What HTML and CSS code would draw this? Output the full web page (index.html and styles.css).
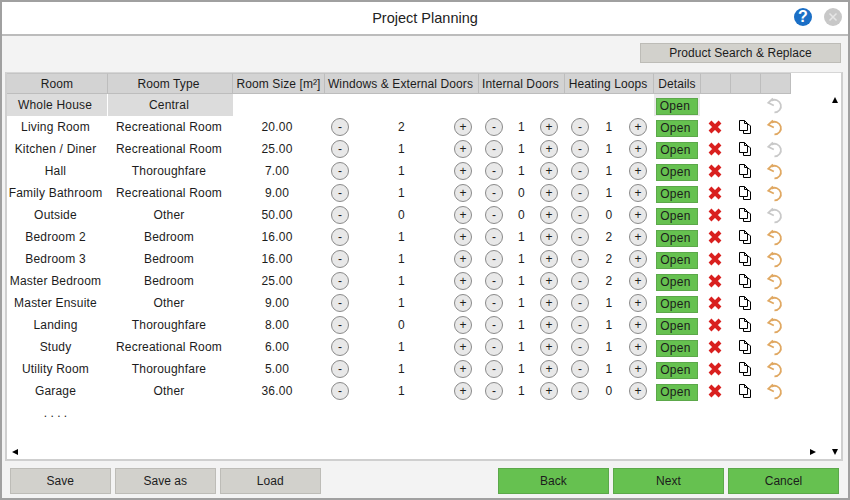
FILE: index.html
```html
<!DOCTYPE html>
<html lang="en">
<head>
<meta charset="utf-8">
<title>Project Planning</title>
<link rel="stylesheet" href="styles.css">
</head>
<body>
<svg class="defs" width="0" height="0" aria-hidden="true">
  <symbol id="i-del" viewBox="0 0 14 14"><path d="M2 2L12 12M12 2L2 12" stroke="#d9201f" stroke-width="4" fill="none"/></symbol>
  <symbol id="i-copy" viewBox="0 0 14 14"><path d="M1.5 .5H6.5L9.5 3.5V10.5H1.5Z" fill="#fff" stroke="#000"/><path d="M6.5 .5V3.5H9.5" fill="none" stroke="#000"/><path d="M9.5 4.5H11L12.5 6V13.5H5.5V10.5" fill="none" stroke="#000"/></symbol>
  <symbol id="i-undo" viewBox="0 0 18 18"><path d="M5 4.5A6 6 0 1 1 8 15.6" fill="none" stroke="currentColor" stroke-width="1.7"/><path d="M6.6 2.2L2.2 6.4L7.4 9" fill="none" stroke="currentColor" stroke-width="1.7"/></symbol>
</svg>
<div class="window">
  <header class="titlebar">
    <h1 class="title">Project Planning</h1>
    <div class="win-actions">
      <span class="win-btn help">?</span>
      <span class="win-btn close"><svg width="10" height="10" viewBox="0 0 10 10"><path d="M1.5 1.5L8.5 8.5M8.5 1.5L1.5 8.5" stroke="#e6e6e6" stroke-width="1.5"/></svg></span>
    </div>
  </header>
  <main class="body">
    <div class="toolbar"><button class="btn top-btn">Product Search &amp; Replace</button></div>
    <section class="panel">
      <div class="content">
        <div class="row head">
          <div class="h">Room</div><div class="h">Room Type</div><div class="h">Room Size [m²]</div><div class="h">Windows &amp; External Doors</div><div class="h">Internal Doors</div><div class="h">Heating Loops</div><div class="h">Details</div><div class="h"></div><div class="h"></div><div class="h"></div>
        </div>
        <div class="row central">
          <div class="c shade">Whole House</div><div class="c shade">Central</div><div class="c"></div><div class="c"></div><div class="c"></div><div class="c"></div><div class="c det-shade"><button class="open">Open</button></div><div class="c"></div><div class="c"></div><div class="c"><svg class="undo off"><use href="#i-undo"/></svg></div>
        </div>
        <div class="row">
          <div class="c">Living Room</div><div class="c">Recreational Room</div><div class="c size">20.00</div>
          <div class="s"><b>-</b><i>2</i><b>+</b></div><div class="s"><b>-</b><i>1</i><b>+</b></div><div class="s"><b>-</b><i>1</i><b>+</b></div>
          <div class="c"><button class="open">Open</button></div><div class="c"><svg class="del"><use href="#i-del"/></svg></div><div class="c"><svg class="copy"><use href="#i-copy"/></svg></div><div class="c"><svg class="undo"><use href="#i-undo"/></svg></div>
        </div>
        <div class="row">
          <div class="c">Kitchen / Diner</div><div class="c">Recreational Room</div><div class="c size">25.00</div>
          <div class="s"><b>-</b><i>1</i><b>+</b></div><div class="s"><b>-</b><i>1</i><b>+</b></div><div class="s"><b>-</b><i>1</i><b>+</b></div>
          <div class="c"><button class="open">Open</button></div><div class="c"><svg class="del"><use href="#i-del"/></svg></div><div class="c"><svg class="copy"><use href="#i-copy"/></svg></div><div class="c"><svg class="undo off"><use href="#i-undo"/></svg></div>
        </div>
        <div class="row">
          <div class="c">Hall</div><div class="c">Thoroughfare</div><div class="c size">7.00</div>
          <div class="s"><b>-</b><i>1</i><b>+</b></div><div class="s"><b>-</b><i>1</i><b>+</b></div><div class="s"><b>-</b><i>1</i><b>+</b></div>
          <div class="c"><button class="open">Open</button></div><div class="c"><svg class="del"><use href="#i-del"/></svg></div><div class="c"><svg class="copy"><use href="#i-copy"/></svg></div><div class="c"><svg class="undo"><use href="#i-undo"/></svg></div>
        </div>
        <div class="row">
          <div class="c">Family Bathroom</div><div class="c">Recreational Room</div><div class="c size">9.00</div>
          <div class="s"><b>-</b><i>1</i><b>+</b></div><div class="s"><b>-</b><i>0</i><b>+</b></div><div class="s"><b>-</b><i>1</i><b>+</b></div>
          <div class="c"><button class="open">Open</button></div><div class="c"><svg class="del"><use href="#i-del"/></svg></div><div class="c"><svg class="copy"><use href="#i-copy"/></svg></div><div class="c"><svg class="undo"><use href="#i-undo"/></svg></div>
        </div>
        <div class="row">
          <div class="c">Outside</div><div class="c">Other</div><div class="c size">50.00</div>
          <div class="s"><b>-</b><i>0</i><b>+</b></div><div class="s"><b>-</b><i>0</i><b>+</b></div><div class="s"><b>-</b><i>0</i><b>+</b></div>
          <div class="c"><button class="open">Open</button></div><div class="c"><svg class="del"><use href="#i-del"/></svg></div><div class="c"><svg class="copy"><use href="#i-copy"/></svg></div><div class="c"><svg class="undo off"><use href="#i-undo"/></svg></div>
        </div>
        <div class="row">
          <div class="c">Bedroom 2</div><div class="c">Bedroom</div><div class="c size">16.00</div>
          <div class="s"><b>-</b><i>1</i><b>+</b></div><div class="s"><b>-</b><i>1</i><b>+</b></div><div class="s"><b>-</b><i>2</i><b>+</b></div>
          <div class="c"><button class="open">Open</button></div><div class="c"><svg class="del"><use href="#i-del"/></svg></div><div class="c"><svg class="copy"><use href="#i-copy"/></svg></div><div class="c"><svg class="undo"><use href="#i-undo"/></svg></div>
        </div>
        <div class="row">
          <div class="c">Bedroom 3</div><div class="c">Bedroom</div><div class="c size">16.00</div>
          <div class="s"><b>-</b><i>1</i><b>+</b></div><div class="s"><b>-</b><i>1</i><b>+</b></div><div class="s"><b>-</b><i>2</i><b>+</b></div>
          <div class="c"><button class="open">Open</button></div><div class="c"><svg class="del"><use href="#i-del"/></svg></div><div class="c"><svg class="copy"><use href="#i-copy"/></svg></div><div class="c"><svg class="undo"><use href="#i-undo"/></svg></div>
        </div>
        <div class="row">
          <div class="c">Master Bedroom</div><div class="c">Bedroom</div><div class="c size">25.00</div>
          <div class="s"><b>-</b><i>1</i><b>+</b></div><div class="s"><b>-</b><i>1</i><b>+</b></div><div class="s"><b>-</b><i>2</i><b>+</b></div>
          <div class="c"><button class="open">Open</button></div><div class="c"><svg class="del"><use href="#i-del"/></svg></div><div class="c"><svg class="copy"><use href="#i-copy"/></svg></div><div class="c"><svg class="undo"><use href="#i-undo"/></svg></div>
        </div>
        <div class="row">
          <div class="c">Master Ensuite</div><div class="c">Other</div><div class="c size">9.00</div>
          <div class="s"><b>-</b><i>1</i><b>+</b></div><div class="s"><b>-</b><i>1</i><b>+</b></div><div class="s"><b>-</b><i>1</i><b>+</b></div>
          <div class="c"><button class="open">Open</button></div><div class="c"><svg class="del"><use href="#i-del"/></svg></div><div class="c"><svg class="copy"><use href="#i-copy"/></svg></div><div class="c"><svg class="undo"><use href="#i-undo"/></svg></div>
        </div>
        <div class="row">
          <div class="c">Landing</div><div class="c">Thoroughfare</div><div class="c size">8.00</div>
          <div class="s"><b>-</b><i>0</i><b>+</b></div><div class="s"><b>-</b><i>1</i><b>+</b></div><div class="s"><b>-</b><i>1</i><b>+</b></div>
          <div class="c"><button class="open">Open</button></div><div class="c"><svg class="del"><use href="#i-del"/></svg></div><div class="c"><svg class="copy"><use href="#i-copy"/></svg></div><div class="c"><svg class="undo"><use href="#i-undo"/></svg></div>
        </div>
        <div class="row">
          <div class="c">Study</div><div class="c">Recreational Room</div><div class="c size">6.00</div>
          <div class="s"><b>-</b><i>1</i><b>+</b></div><div class="s"><b>-</b><i>1</i><b>+</b></div><div class="s"><b>-</b><i>1</i><b>+</b></div>
          <div class="c"><button class="open">Open</button></div><div class="c"><svg class="del"><use href="#i-del"/></svg></div><div class="c"><svg class="copy"><use href="#i-copy"/></svg></div><div class="c"><svg class="undo"><use href="#i-undo"/></svg></div>
        </div>
        <div class="row">
          <div class="c">Utility Room</div><div class="c">Thoroughfare</div><div class="c size">5.00</div>
          <div class="s"><b>-</b><i>1</i><b>+</b></div><div class="s"><b>-</b><i>1</i><b>+</b></div><div class="s"><b>-</b><i>1</i><b>+</b></div>
          <div class="c"><button class="open">Open</button></div><div class="c"><svg class="del"><use href="#i-del"/></svg></div><div class="c"><svg class="copy"><use href="#i-copy"/></svg></div><div class="c"><svg class="undo"><use href="#i-undo"/></svg></div>
        </div>
        <div class="row">
          <div class="c">Garage</div><div class="c">Other</div><div class="c size">36.00</div>
          <div class="s"><b>-</b><i>1</i><b>+</b></div><div class="s"><b>-</b><i>1</i><b>+</b></div><div class="s"><b>-</b><i>0</i><b>+</b></div>
          <div class="c"><button class="open">Open</button></div><div class="c"><svg class="del"><use href="#i-del"/></svg></div><div class="c"><svg class="copy"><use href="#i-copy"/></svg></div><div class="c"><svg class="undo"><use href="#i-undo"/></svg></div>
        </div>
        <div class="row">
          <div class="c dots">. . . .</div>
        </div>
      </div>
      <div class="vscroll"><span class="arrow up"></span><span class="arrow down"></span></div>
      <div class="hscroll"><span class="arrow left"></span><span class="arrow right"></span></div>
    </section>
    <footer class="footer">
      <div class="group plain-group">
        <button class="btn plain">Save</button>
        <button class="btn plain">Save as</button>
        <button class="btn plain">Load</button>
      </div>
      <div class="group">
        <button class="btn go">Back</button>
        <button class="btn go">Next</button>
        <button class="btn go">Cancel</button>
      </div>
    </footer>
  </main>
</div>
</body>
</html>
```
FILE: styles.css
```css
* { box-sizing: border-box; }
html, body { margin: 0; padding: 0; }
body {
  width: 850px;
  height: 500px;
  overflow: hidden;
  font-family: "Liberation Sans", Arial, sans-serif;
  font-size: 12px;
  color: #1c1c1c;
}
.defs { position: absolute; }
.window {
  width: 850px;
  height: 500px;
  display: flex;
  flex-direction: column;
  border: 2px solid #a0a0a0;
  background: #f3f3f3;
}
.titlebar {
  height: 34px;
  background: #fff;
  border-bottom: 2px solid #bcbcbc;
  display: flex;
  align-items: center;
  justify-content: center;
  position: relative;
}
.title {
  margin: 0;
  font-size: 14.5px;
  font-weight: 400;
  color: #222;
}
.win-actions {
  position: absolute;
  top: 6px;
  right: 6px;
  display: flex;
  gap: 12px;
}
.win-btn {
  width: 18px;
  height: 18px;
  border-radius: 50%;
  display: flex;
  align-items: center;
  justify-content: center;
}
.help {
  background: #1b6fc6;
  color: #fff;
  font-size: 16px;
  font-weight: 700;
}
.close { background: #c8c8c8; }
.body {
  flex: 1;
  display: flex;
  flex-direction: column;
  padding: 7px 5px 0 3px;
  min-height: 0;
}
.toolbar {
  display: flex;
  justify-content: flex-end;
  height: 20px;
  padding-right: 2px;
}
.btn {
  font: inherit;
  letter-spacing: .05px;
  color: #1c1c1c;
  padding: 0;
  border-style: solid;
  border-width: 1px;
}
.top-btn {
  width: 201px;
  height: 20px;
  background: #d2d1cc;
  border-color: #bdbcb7;
}
.panel {
  margin-top: 9px;
  height: 389px;
  background: #fff;
  border-top: 1px solid #d6d6d6;
  border-left: 2px solid #cfcfcf;
  border-right: 2px solid #cfcfcf;
  border-bottom: 2px solid #cfcfcf;
  display: grid;
  grid-template-columns: 1fr 12px;
  grid-template-rows: 1fr 14px;
  overflow: hidden;
}
.content { min-width: 0; }
.row {
  display: grid;
  grid-template-columns: 101px 125px 92px 154px 86px 89px 47px 30px 30px 30px;
  height: 22px;
}
.head { height: 21px; }
.head .h {
  background: #d3d3d3;
  border-right: 1px solid #bdbdbd;
  border-top: 1px solid #c4c4c4;
  border-bottom: 1px solid #bdbdbd;
  display: flex;
  align-items: center;
  justify-content: center;
  white-space: nowrap;
  letter-spacing: .1px;
}
.head .h:nth-child(2) { padding-right: 3px; }
.head .h:nth-child(4),
.head .h:nth-child(5),
.head .h:nth-child(6) { padding-right: 2px; }
.c {
  display: flex;
  align-items: center;
  justify-content: center;
  white-space: nowrap;
  letter-spacing: .2px;
  min-width: 0;
}
.c:nth-child(1) { padding-right: 4px; }
.c:nth-child(2) { padding-right: 3px; }
.c.size { padding-right: 4px; }
.c:nth-child(7) { padding-right: 1px; }
.c:nth-child(n+8) { padding-right: 2px; }
.dots { letter-spacing: 0; }
.shade {
  background: #dcdcdc;
  margin-right: 1px;
}
.central .c.shade:nth-child(2) { margin-right: 0; }
.det-shade { background: #e9e9e9; margin-right: 1px; padding-right: 0; }
.s {
  display: flex;
  align-items: center;
  justify-content: space-between;
  padding: 0 7px 0 6px;
}
.s b {
  width: 18px;
  height: 18px;
  flex: none;
  border-radius: 50%;
  background: #e8e8e8;
  border: 1px solid #8a8a8a;
  display: flex;
  align-items: center;
  justify-content: center;
  font-weight: 400;
  font-size: 12px;
  line-height: 1;
}
.s i {
  font-style: normal;
  letter-spacing: .2px;
}
.open {
  width: 42px;
  height: 17px;
  margin-top: 2px;
  padding: 0 3px 0 0;
  background: #66c150;
  border: 1px solid #5ca84a;
  font: inherit;
  letter-spacing: .3px;
  color: #1c1c1c;
}
.del { width: 14px; height: 14px; }
.copy { width: 14px; height: 14px; }
.undo { width: 19px; height: 19px; color: #e0a862; }
.undo.off { color: #c9c9c9; }
.vscroll {
  grid-row: 1 / span 2;
  grid-column: 2;
  display: flex;
  flex-direction: column;
  justify-content: space-between;
  align-items: center;
  padding: 24px 0 4px;
}
.hscroll {
  grid-row: 2;
  grid-column: 1;
  display: flex;
  justify-content: space-between;
  align-items: center;
  padding: 0 13px 0 5px;
}
.arrow { width: 0; height: 0; display: block; border-style: solid; border-color: transparent; }
.up { border-width: 0 3px 6px; border-bottom-color: #000; }
.down { border-width: 6px 3px 0; border-top-color: #000; }
.left { border-width: 3px 6px 3px 0; border-right-color: #000; }
.right { border-width: 3px 0 3px 6px; border-left-color: #000; }
.footer {
  margin-top: 7px;
  padding: 0 4px 0 5px;
  display: flex;
  justify-content: space-between;
}
.group { display: flex; gap: 4px; }
.plain-group { gap: 4.5px; }
.plain {
  width: 100.5px;
  height: 26px;
  background: #d2d1cc;
  border-color: #bdbcb7;
}
.go {
  width: 111px;
  height: 26px;
  background: #66c150;
  border-color: #5ca84a;
}
```
